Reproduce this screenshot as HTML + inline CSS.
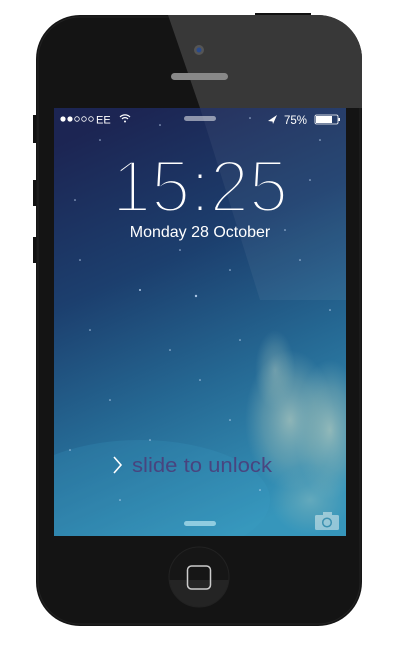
<!DOCTYPE html>
<html><head><meta charset="utf-8"><style>
html,body{margin:0;padding:0;background:#fff;width:400px;height:672px;overflow:hidden}
svg{display:block}
text{font-family:"Liberation Sans",sans-serif}
</style></head><body>
<svg width="400" height="672" viewBox="0 0 400 672" xmlns="http://www.w3.org/2000/svg">
<defs>
<linearGradient id="bg" x1="0.3" y1="0" x2="0.6" y2="1">
<stop offset="0" stop-color="#1c2553"/>
<stop offset="0.35" stop-color="#1c3f6e"/>
<stop offset="0.65" stop-color="#256893"/>
<stop offset="1" stop-color="#3696bb"/>
</linearGradient>
<radialGradient id="cl" cx="0.5" cy="0.5" r="0.5">
<stop offset="0" stop-color="#b8cdbf" stop-opacity="0.7"/>
<stop offset="0.6" stop-color="#90b6b4" stop-opacity="0.4"/>
<stop offset="1" stop-color="#7fb0b8" stop-opacity="0"/>
</radialGradient>
<linearGradient id="hb" x1="0" y1="0" x2="0" y2="1">
<stop offset="0.55" stop-color="#161616"/><stop offset="0.55" stop-color="#242424"/>
</linearGradient>
<clipPath id="sc"><rect x="54" y="108" width="292" height="428"/></clipPath>
<clipPath id="ph"><rect x="36" y="15" width="326" height="611" rx="44"/></clipPath>
<mask id="tm" maskUnits="userSpaceOnUse" x="0" y="0" width="400" height="672">
<rect x="0" y="0" width="400" height="672" fill="#000"/>
<text x="200" y="212" font-size="74" fill="#fff" stroke="#000" stroke-width="4" text-anchor="middle" textLength="176" lengthAdjust="spacingAndGlyphs">15:25</text>
</mask>
</defs>
<rect x="255" y="13" width="56" height="4" fill="#111"/>
<rect x="33" y="115" width="4" height="28" fill="#111"/>
<rect x="33" y="180" width="4" height="26" fill="#111"/>
<rect x="33" y="237" width="4" height="26" fill="#111"/>
<rect x="36" y="15" width="326" height="611" rx="44" fill="#151515"/>
<rect x="38" y="17" width="322" height="607" rx="42" fill="#141414" stroke="#222" stroke-width="1"/>
<polygon points="168,15 362,15 362,108 200,108" fill="#383838" clip-path="url(#ph)"/>
<circle cx="199" cy="50" r="5" fill="#555"/><circle cx="199" cy="50" r="2.5" fill="#2a4a8a"/>
<rect x="171" y="73" width="57" height="7" rx="3.5" fill="#888"/>
<g clip-path="url(#sc)">
<rect x="54" y="108" width="292" height="428" fill="url(#bg)"/>
<ellipse cx="140" cy="500" rx="130" ry="60" fill="#3aa0c8" opacity="0.2"/>
<ellipse cx="290" cy="420" rx="45" ry="70" fill="url(#cl)"/>
<ellipse cx="330" cy="430" rx="35" ry="70" fill="url(#cl)"/>
<ellipse cx="275" cy="370" rx="20" ry="40" fill="url(#cl)" opacity="0.6"/>
<ellipse cx="310" cy="500" rx="40" ry="35" fill="url(#cl)" opacity="0.5"/>
<polygon points="200,108 346,108 346,300 260,300" fill="#fff" opacity="0.05"/>
<g fill="#cfe4ff" opacity="0.8">
<circle cx="100" cy="140" r="0.8"/><circle cx="160" cy="125" r="0.8"/><circle cx="250" cy="118" r="0.8"/><circle cx="320" cy="140" r="0.8"/>
<circle cx="80" cy="260" r="0.8"/><circle cx="140" cy="290" r="1"/><circle cx="196" cy="296" r="1.2"/><circle cx="230" cy="270" r="0.8"/>
<circle cx="300" cy="260" r="0.8"/><circle cx="330" cy="310" r="0.8"/><circle cx="90" cy="330" r="0.8"/><circle cx="170" cy="350" r="0.8"/>
<circle cx="240" cy="340" r="0.8"/><circle cx="110" cy="400" r="0.8"/><circle cx="200" cy="380" r="0.8"/><circle cx="70" cy="450" r="0.8"/>
<circle cx="150" cy="440" r="0.8"/><circle cx="230" cy="420" r="0.8"/><circle cx="120" cy="500" r="0.8"/><circle cx="260" cy="490" r="0.8"/>
<circle cx="310" cy="180" r="0.8"/><circle cx="75" cy="200" r="0.8"/><circle cx="285" cy="230" r="0.8"/><circle cx="180" cy="250" r="0.8"/>
</g>
<g fill="#fff"><circle cx="63" cy="119" r="2.6"/><circle cx="70" cy="119" r="2.6"/></g>
<g fill="none" stroke="#fff" stroke-width="0.8">
<circle cx="77" cy="119" r="2.3"/><circle cx="84" cy="119" r="2.3"/><circle cx="91" cy="119" r="2.3"/>
</g>
<text x="96" y="123.5" font-size="11" fill="#fff">EE</text>
<path d="M120 117 a7 7 0 0 1 10 0 M122 119 a4 4 0 0 1 6 0" stroke="#fff" stroke-width="1.2" fill="none"/>
<circle cx="125" cy="121.5" r="1" fill="#fff"/>
<rect x="184" y="116" width="32" height="5" rx="2.5" fill="#fff" opacity="0.5"/>
<path d="M268 121 L277 115 L273 124 L272.5 121.5 Z" fill="#fff"/>
<text x="284" y="124" font-size="11.5" fill="#fff">75%</text>
<rect x="315" y="115" width="23" height="9" rx="1.5" fill="none" stroke="#fff" stroke-width="0.8"/>
<rect x="316" y="116" width="16" height="7" fill="#fff"/>
<rect x="338.5" y="118" width="1.5" height="3" fill="#fff"/>
<rect x="54" y="108" width="292" height="428" fill="#fff" mask="url(#tm)"/>
<text x="200" y="237" font-size="16" fill="#fff" text-anchor="middle">Monday 28 October</text>
<path d="M114 457 L121 465 L114 473" stroke="#fff" stroke-width="1.6" fill="none"/>
<text x="132" y="472" font-size="20" fill="#4d3a78" opacity="0.85" textLength="140" lengthAdjust="spacingAndGlyphs">slide to unlock</text>
<rect x="184" y="521" width="32" height="5" rx="2.5" fill="#a8dbea" opacity="0.8"/>
<g opacity="0.55">
<rect x="315" y="515" width="24" height="15" rx="1.5" fill="#dfeef0"/>
<rect x="323" y="512" width="9" height="4" fill="#dfeef0"/>
<circle cx="327" cy="522.5" r="4.3" fill="none" stroke="#3a8aa8" stroke-width="1.5"/>
</g>
</g>
<circle cx="199" cy="577" r="30" fill="url(#hb)" stroke="#222"/>
<rect x="187.5" y="566" width="23" height="23" rx="4" fill="none" stroke="#ccc" stroke-width="1.5"/>
</svg>
</body></html>
